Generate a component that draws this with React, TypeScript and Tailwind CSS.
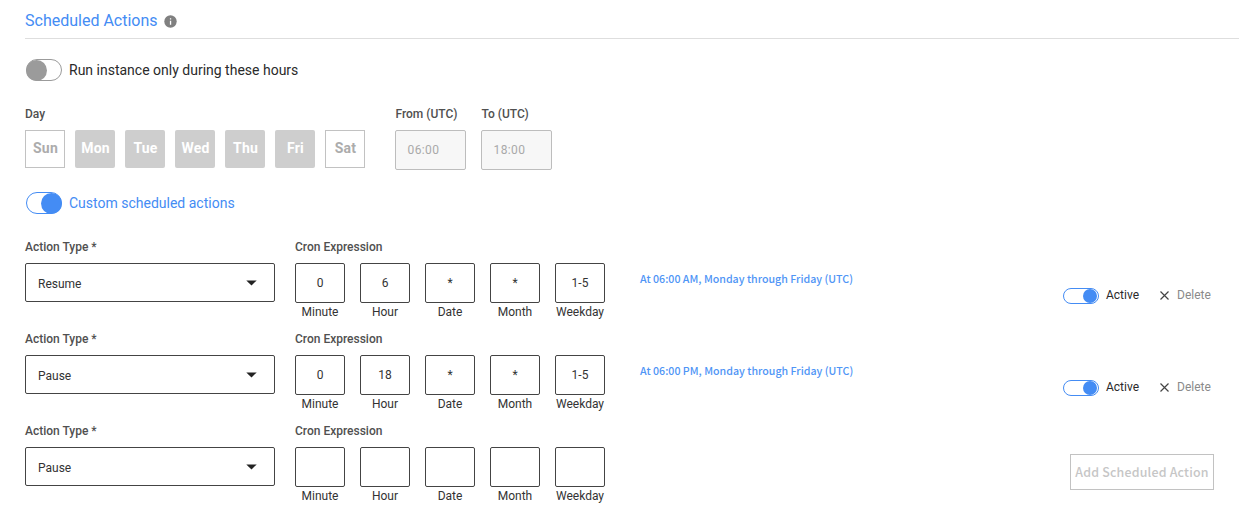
import React from 'react';

type Action = { type: string; cron: string[]; summary?: string };

const days = ['Sun', 'Mon', 'Tue', 'Wed', 'Thu', 'Fri', 'Sat'];
const units = ['Minute', 'Hour', 'Date', 'Month', 'Weekday'];
const actions: Action[] = [
  { type: 'Resume', cron: ['0', '6', '*', '*', '1-5'], summary: 'At 06:00 AM, Monday through Friday (UTC)' },
  { type: 'Pause', cron: ['0', '18', '*', '*', '1-5'], summary: 'At 06:00 PM, Monday through Friday (UTC)' },
  { type: 'Pause', cron: ['', '', '', '', ''] },
];

function DayButton({ day }: { day: string }) {
  const weekend = day === 'Sun' || day === 'Sat';
  return (
    <button
      className={
        weekend
          ? 'h-[38px] w-10 border border-[#c2c2c2] bg-white pb-0.5 pl-px text-sm leading-5 font-bold tracking-[0.2px] text-[#acacac]'
          : 'h-[38px] w-10 rounded-xs bg-[#cecece] pb-0.5 pl-px text-sm leading-5 font-bold tracking-[0.2px] text-white'
      }
    >
      {day}
    </button>
  );
}

function TimeField({ label, value }: { label: string; value: string }) {
  return (
    <div className="w-[71px]">
      <div className="h-4 pl-[0.5px] text-xs leading-4 font-medium whitespace-nowrap text-[#505050]">{label}</div>
      <div className="mt-2 flex h-10 items-center rounded-xs border border-[#bdbdbd] bg-[#f7f7f7] pl-[11.5px] text-xs tracking-[0.4px] text-[#a9a9a9]">
        {value}
      </div>
    </div>
  );
}

function ActionRow({ action }: { action: Action }) {
  return (
    <div className="flex h-[92px]">
      <div className="w-[250px]">
        <div className="h-4 text-xs leading-4 font-medium text-[#505050]">Action Type *</div>
        <div className="mt-2 flex h-[39px] items-center justify-between rounded-xs border border-[#444] pt-[3px] pr-[17px] pl-3 text-xs text-[#333]">
          <span>{action.type}</span>
          <svg className="mb-[2px] h-[6px] w-[11px]" viewBox="0 0 11 6">
            <path d="M.3.4h10.4L5.5 5.6z" fill="#222" />
          </svg>
        </div>
      </div>
      <div className="ml-5 w-[310px]">
        <div className="h-4 text-xs leading-4 font-medium text-[#505050]">Cron Expression</div>
        <div className="mt-2 flex gap-[15px]">
          {units.map((unit, i) => (
            <div key={unit} className="flex w-[50px] flex-col items-center text-xs leading-4 text-[#333]">
              <div className="flex h-10 w-full items-center justify-center rounded-xs border border-[#444]">
                {action.cron[i]}
              </div>
              <div className="mt-px">{unit}</div>
            </div>
          ))}
        </div>
      </div>
      {action.summary ? (
        <>
          <div className="mt-8 ml-[35px] w-[423px] font-['Noto_Sans_CJK_SC','Noto_Sans',sans-serif] text-[10.65px] leading-4 font-medium text-[#4f95f6]">
            {action.summary}
          </div>
          <div className="mt-12 flex h-4 items-center text-xs leading-4">
            <div className="mt-0.5 flex h-4 w-9 items-center justify-end rounded-full border border-[#448cf4] pr-px">
              <div className="size-[14px] rounded-full bg-[#448cf4]" />
            </div>
            <span className="ml-[7px] w-[54px] text-[#2a2a2a]">Active</span>
            <svg className="mt-px h-[9px] w-[9px]" viewBox="0 0 9 9">
              <path d="M.5.5l8 8M8.5.5l-8 8" stroke="#444" strokeWidth="1.15" />
            </svg>
            <span className="ml-2 text-[#8a8a8a]">Delete</span>
          </div>
        </>
      ) : (
        <button className="mt-[31px] ml-[465px] h-9 w-36 border border-[#c2c2c2] font-['Noto_Sans_CJK_SC','Noto_Sans',sans-serif] text-[12.4px] leading-5 font-medium tracking-[0.2px] whitespace-nowrap text-[#c6c6c6]">
          Add Scheduled Action
        </button>
      )}
    </div>
  );
}

export default function App() {
  return (
    <main className="h-[520px] w-[1239px] overflow-hidden bg-white pl-[25px] font-[Roboto,sans-serif]">
      <header className="flex h-[39px] items-center border-b border-[#dedede] pt-[3px]">
        <h1 className="text-base leading-6 text-[#448cf4]">Scheduled Actions</h1>
        <svg className="mt-px ml-1.5 size-[13px]" viewBox="0 0 13 13">
          <circle cx="6.5" cy="6.5" r="6.2" fill="#808080" />
          <path d="M5.9 3.2h1.3v1.4H5.9zM5.9 5.8h1.3v4H5.9z" fill="#fff" />
        </svg>
      </header>

      <div className="mt-5 ml-px flex h-[22px] items-center">
        <div className="flex h-[22px] w-9 items-center rounded-full border border-[#9b9b9b]">
          <div className="-ml-px size-[21px] rounded-full bg-[#9b9b9b]" />
        </div>
        <span className="ml-[7px] text-sm leading-5 text-[#2a2a2a]">Run instance only during these hours</span>
      </div>

      <div className="mt-[25px] flex h-[64px]">
        <div>
          <div className="h-4 text-xs leading-4 font-medium text-[#505050]">Day</div>
          <div className="mt-2 flex gap-2.5">
            {days.map((day) => (
              <DayButton key={day} day={day} />
            ))}
          </div>
        </div>
        <div className="ml-[30px] flex gap-[15px]">
          <TimeField label="From (UTC)" value="06:00" />
          <TimeField label="To (UTC)" value="18:00" />
        </div>
      </div>

      <div className="mt-[22px] ml-px flex h-[22px] items-center">
        <div className="flex h-[22px] w-9 items-center justify-end rounded-full border border-[#448cf4]">
          <div className="-mr-px size-[21px] rounded-full bg-[#448cf4]" />
        </div>
        <span className="ml-[7px] text-sm leading-5 text-[#448cf4]">Custom scheduled actions</span>
      </div>

      <section className="mt-[25px]">
        {actions.map((action, i) => (
          <ActionRow key={i} action={action} />
        ))}
      </section>
    </main>
  );
}
